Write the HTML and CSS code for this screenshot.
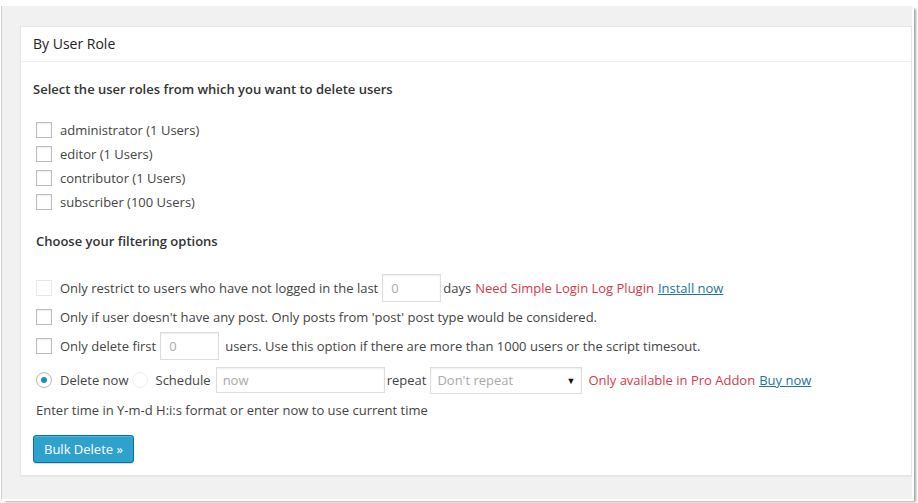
FILE: index.html
```html
<!DOCTYPE html>
<html lang="en">
<head>
<meta charset="utf-8">
<title>Bulk Delete - By User Role</title>
<link rel="stylesheet" href="styles.css">
</head>
<body>
<div class="window">
  <div class="postbox">
    <h3 class="hndle">By User Role</h3>
    <div class="inside">
      <h4 class="intro">Select the user roles from which you want to delete users</h4>
      <div class="roles">
        <label class="row"><input type="checkbox" class="cb"><span>administrator (1 Users)</span></label>
        <label class="row"><input type="checkbox" class="cb"><span>editor (1 Users)</span></label>
        <label class="row"><input type="checkbox" class="cb"><span>contributor (1 Users)</span></label>
        <label class="row"><input type="checkbox" class="cb"><span>subscriber (100 Users)</span></label>
      </div>
      <h4 class="filter-title">Choose your filtering options</h4>
      <div class="filters">
        <div class="row row-tall">
          <input type="checkbox" class="cb" disabled>
          <span>Only restrict to users who have not logged in the last</span>
          <input type="text" class="num" value="0" disabled>
          <span>days</span>
          <span class="warn">Need Simple Login Log Plugin</span>
          <a href="#" class="link">Install now</a>
        </div>
        <div class="row row-mid">
          <input type="checkbox" class="cb">
          <span>Only if user doesn't have any post. Only posts from 'post' post type would be considered.</span>
        </div>
        <div class="row row-tall">
          <input type="checkbox" class="cb">
          <span>Only delete first</span>
          <input type="text" class="num" value="0">
          <span class="after-num">users. Use this option if there are more than 1000 users or the script timesout.</span>
        </div>
        <div class="row row-when">
          <input type="radio" name="when" class="rd" checked>
          <span>Delete now</span>
          <input type="radio" name="when" class="rd rd-off" disabled>
          <span>Schedule</span>
          <input type="text" class="sched" placeholder="now" disabled>
          <span>repeat</span>
          <span class="select-wrap"><select class="repeat" disabled><option>Don't repeat</option></select></span>
          <span class="warn">Only available in Pro Addon</span>
          <a href="#" class="link">Buy now</a>
        </div>
        <div class="row row-hint">Enter time in Y-m-d H:i:s format or enter now to use current time</div>
      </div>
      <div class="actions">
        <button type="button" class="button-primary">Bulk Delete »</button>
      </div>
    </div>
  </div>
</div>
</body>
</html>
```

FILE: styles.css
```css
* { box-sizing: border-box; }

html, body {
  margin: 0;
  padding: 0;
  background: #fff;
  width: 918px;
  height: 503px;
  overflow: hidden;
}

body {
  font-family: "Open Sans", "Liberation Sans", sans-serif;
  font-size: 13px;
  color: #444;
}

.window {
  margin: 6px 0 0 1px;
  width: 911px;
  height: 493px;
  background: #f1f1f1;
  border-left: 1px solid #cfcfcf;
  padding: 20px 0 0 18px;
  box-shadow: 2px 2px 0 0 #fff, 4px 3px 2px 0 rgba(0, 0, 0, 0.35);
}

.postbox {
  background: #fff;
  border: 1px solid #e5e5e5;
  box-shadow: 0 1px 1px rgba(0, 0, 0, 0.04);
  height: 450px;
}

.hndle {
  margin: 0;
  height: 35px;
  line-height: 34px;
  padding: 0 12px;
  font-size: 14px;
  font-weight: 400;
  color: #222;
  border-bottom: 1px solid #eee;
}

.inside {
  padding: 0 12px;
}

.intro {
  margin: 18px 0 0;
  font-size: 13px;
  line-height: 18px;
  font-weight: 600;
  color: #333;
}

.roles {
  margin-top: 20px;
  padding-left: 3px;
}

.row {
  display: flex;
  align-items: center;
  height: 24px;
  white-space: nowrap;
}

.cb {
  -webkit-appearance: none;
  appearance: none;
  width: 16px;
  height: 16px;
  margin: 0 8px 0 0;
  border: 1px solid #bbb;
  background: #fff;
  box-shadow: inset 0 1px 2px rgba(0, 0, 0, 0.07);
  flex: none;
}

.cb:disabled {
  border-color: #e8e8e8;
  box-shadow: none;
}

.filter-title {
  margin: 18px 0 0;
  padding-left: 3px;
  font-size: 13px;
  line-height: 18px;
  font-weight: 600;
  color: #333;
}

.filters {
  margin-top: 22px;
  padding-left: 3px;
}

.row-tall { height: 32px; }
.row-mid { height: 26px; }
.row-when { height: 36px; }
.row-hint { height: 24px; }

.num {
  width: 59px;
  height: 28px;
  margin: 0 2px 0 4px;
  padding: 0 8px;
  border: 1px solid #ddd;
  box-shadow: inset 0 1px 2px rgba(0, 0, 0, 0.07);
  font-family: inherit;
  font-size: 13px;
  color: #aaa;
  background: #fff;
}

.after-num { margin-left: 4px; }

.warn {
  color: #d8394b;
  margin-left: 4px;
}

.link {
  color: #21759b;
  margin-left: 4px;
  text-decoration: underline;
}

.rd {
  -webkit-appearance: none;
  appearance: none;
  width: 16px;
  height: 16px;
  margin: 0 8px 0 0;
  border: 1px solid #bbb;
  border-radius: 50%;
  background: #fff;
  box-shadow: inset 0 1px 2px rgba(0, 0, 0, 0.07);
  display: flex;
  align-items: center;
  justify-content: center;
  flex: none;
}

.rd:checked::before {
  content: "";
  width: 6px;
  height: 6px;
  border-radius: 50%;
  background: #1e8cbe;
}

.rd-off {
  margin-left: 3px;
  border-color: #f0f0f0;
  box-shadow: none;
}

.sched {
  width: 169px;
  height: 26px;
  margin: 0 2px 0 5px;
  padding: 0 6px;
  border: 1px solid #ddd;
  box-shadow: inset 0 1px 2px rgba(0, 0, 0, 0.07);
  font-family: inherit;
  font-size: 13px;
  background: #fff;
}

.sched::placeholder { color: #aaa; }

.select-wrap {
  position: relative;
  display: inline-block;
  margin-left: 4px;
}

.select-wrap::after {
  content: "▼";
  position: absolute;
  right: 7px;
  top: 7px;
  font-size: 9px;
  color: #111;
  pointer-events: none;
}

.repeat {
  -webkit-appearance: none;
  appearance: none;
  width: 152px;
  height: 27px;
  padding: 0 6px;
  border: 1px solid #ddd;
  box-shadow: inset 0 1px 2px rgba(0, 0, 0, 0.07);
  font-family: inherit;
  font-size: 13px;
  color: #aaa;
  background: #fff;
  opacity: 1;
}

.row-when .warn { margin-left: 6px; }

.actions {
  margin-top: 13px;
}

.button-primary {
  height: 28px;
  padding: 0 10px;
  border: 1px solid #0074a2;
  border-radius: 3px;
  background: #2ea2cc;
  box-shadow: inset 0 1px 0 rgba(120, 200, 230, 0.5), 0 1px 0 rgba(0, 0, 0, 0.15);
  color: #fff;
  font-family: inherit;
  font-size: 13px;
  line-height: 26px;
  white-space: nowrap;
  cursor: pointer;
}
```
